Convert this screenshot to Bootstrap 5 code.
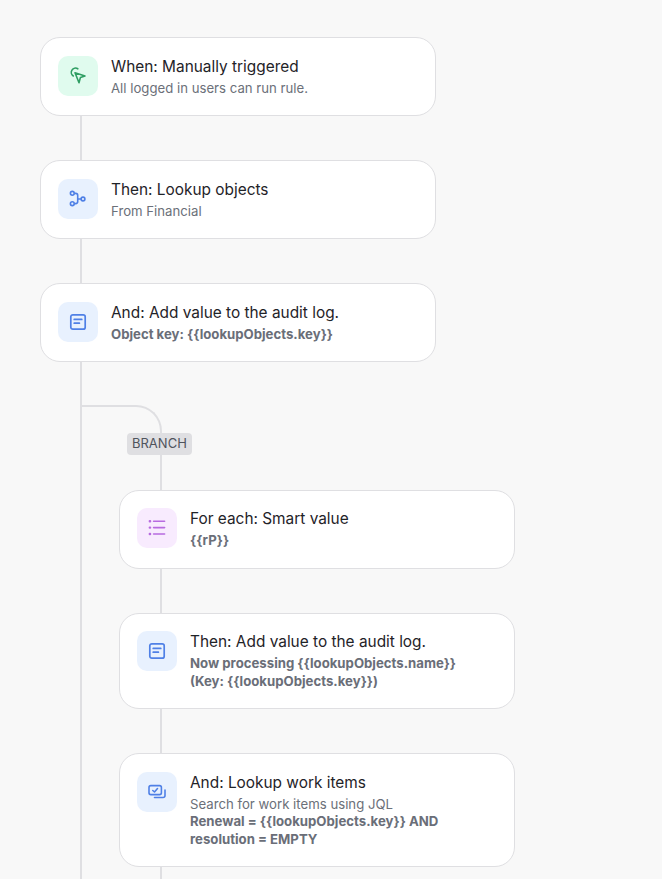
<!DOCTYPE html>
<html lang="en">
<head>
<meta charset="utf-8">
<title>Automation rule</title>
<link href="https://cdn.jsdelivr.net/npm/bootstrap@5.3.0/dist/css/bootstrap.min.css" rel="stylesheet">
<style>
html, body { height: 879px; overflow: hidden; }
body { background: #f8f8f8; font-family: Inter, "Liberation Sans", sans-serif; color: #1f2328; }
.canvas { height: 879px; overflow: hidden; padding: 37px 0 0 40px; }
.rule-card { width: 396px; background: #fff; border: 1px solid #dfdfe2; border-radius: 20px; padding: 17.9px 17px 17.6px; gap: 13px; }
.rule-icon { width: 40px; height: 40px; flex: none; border-radius: 10px; }
.rule-icon svg { width: 20px; height: 20px; }
.tint-green { background: #e0fbee; color: #2f9e63; }
.tint-blue { background: #e8f1fe; color: #4f80e6; }
.tint-purple { background: #f8ebfe; color: #b76be0; }
.rule-title { font-size: 15.4px; line-height: 22px; color: #1f2328; }
.rule-sub { font-size: 13.2px; line-height: 17.5px; margin-top: 2px; color: #6b7079; }
.rule-sub b { font-weight: 700; color: #6a6e78; display: block; }
.stem { width: 2px; height: 44px; margin-left: 40px; background: #dfdfe2; }
.rail { margin-left: 40px; padding-top: 43px; border-left: 2px solid #dfdfe2; height: 600px; }
.curve { width: 80px; height: 44px; border-top: 2px solid #dfdfe2; border-right: 2px solid #dfdfe2; border-top-right-radius: 26px; }
.branch-tag { width: fit-content; margin-left: 45px; margin-top: -16px; position: relative; background: #dfdfe2; color: #4f545d; font-size: 13px; line-height: 21px; padding: 0 5px 1px; border-radius: 4px; }
.branch-body { margin-left: 37px; }
.stem-in { margin-left: 41px; height: 34.6px; }
.stem-mid { margin-left: 41px; }
</style>
</head>
<body>
<div class="canvas">
  <div class="rule-card d-flex">
    <div class="rule-icon tint-green d-flex align-items-center justify-content-center">
      <svg viewBox="0 0 20 20" fill="none" stroke="currentColor" stroke-width="1.6" stroke-linejoin="round" stroke-linecap="round"><path d="M7 6.7 L17 10 L12.4 11.6 L11 16.7z"/><path d="M9.8 2.8 A4.2 4.2 0 0 0 5.3 10"/></svg>
    </div>
    <div>
      <div class="rule-title">When: Manually triggered</div>
      <div class="rule-sub">All logged in users can run rule.</div>
    </div>
  </div>
  <div class="stem"></div>
  <div class="rule-card d-flex">
    <div class="rule-icon tint-blue d-flex align-items-center justify-content-center">
      <svg viewBox="0 0 20 20" fill="none" stroke="currentColor" stroke-width="1.6"><circle cx="4.3" cy="4.3" r="1.9"/><circle cx="4.3" cy="14.7" r="1.9"/><circle cx="15" cy="10" r="1.9"/><path d="M6.2 4.4 H7.7 a2 2 0 0 1 2 2 V12.6 a2 2 0 0 1-2 2 H6.2 M9.7 10 H13.1"/></svg>
    </div>
    <div>
      <div class="rule-title">Then: Lookup objects</div>
      <div class="rule-sub">From Financial</div>
    </div>
  </div>
  <div class="stem"></div>
  <div class="rule-card d-flex">
    <div class="rule-icon tint-blue d-flex align-items-center justify-content-center">
      <svg viewBox="0 0 20 20" fill="none" stroke="currentColor" stroke-width="1.7" stroke-linecap="round"><rect x="2.8" y="2.8" width="14.4" height="14.4" rx="2"/><path d="M6.2 7.4 H13.8 M6.2 11.2 H11.4"/></svg>
    </div>
    <div>
      <div class="rule-title">And: Add value to the audit log.</div>
      <div class="rule-sub"><b>Object key: {{lookupObjects.key}}</b></div>
    </div>
  </div>
  <div class="rail">
    <div class="curve"></div>
    <div class="branch-tag">BRANCH</div>
    <div class="branch-body">
      <div class="stem stem-in"></div>
      <div class="rule-card d-flex">
        <div class="rule-icon tint-purple d-flex align-items-center justify-content-center">
          <svg viewBox="0 0 20 20" fill="none" stroke="currentColor" stroke-width="1.6" stroke-linecap="round"><path d="M6.6 3.2 H17.6 M6.6 9.6 H17.6 M6.6 16 H17.6"/><path d="M2.8 3.2 h.3 M2.8 9.6 h.3 M2.8 16 h.3" stroke-width="2.4"/></svg>
        </div>
        <div>
          <div class="rule-title">For each: Smart value</div>
          <div class="rule-sub"><b>{{rP}}</b></div>
        </div>
      </div>
      <div class="stem stem-mid"></div>
      <div class="rule-card d-flex">
        <div class="rule-icon tint-blue d-flex align-items-center justify-content-center">
          <svg viewBox="0 0 20 20" fill="none" stroke="currentColor" stroke-width="1.7" stroke-linecap="round"><rect x="2.8" y="2.8" width="14.4" height="14.4" rx="2"/><path d="M6.2 7.4 H13.8 M6.2 11.2 H11.4"/></svg>
        </div>
        <div>
          <div class="rule-title">Then: Add value to the audit log.</div>
          <div class="rule-sub"><b>Now processing {{lookupObjects.name}}<br>(Key: {{lookupObjects.key}})</b></div>
        </div>
      </div>
      <div class="stem stem-mid"></div>
      <div class="rule-card d-flex">
        <div class="rule-icon tint-blue d-flex align-items-center justify-content-center">
          <svg viewBox="0 0 20 20" fill="none" stroke="currentColor" stroke-width="1.6" stroke-linecap="round" stroke-linejoin="round"><rect x="2" y="3.6" width="12.4" height="9" rx="1.8"/><path d="M5.8 8.5 l1.7 1.5 3-3.5"/><path d="M18 8 v5.5 a2 2 0 0 1-2 2 H7.5"/></svg>
        </div>
        <div>
          <div class="rule-title">And: Lookup work items</div>
          <div class="rule-sub">Search for work items using JQL<b>Renewal = {{lookupObjects.key}} AND<br>resolution = EMPTY</b></div>
        </div>
      </div>
      <div class="stem stem-mid"></div>
    </div>
  </div>
</div>
<script src="https://cdn.jsdelivr.net/npm/bootstrap@5.3.0/dist/js/bootstrap.bundle.min.js"></script>
</body>
</html>
